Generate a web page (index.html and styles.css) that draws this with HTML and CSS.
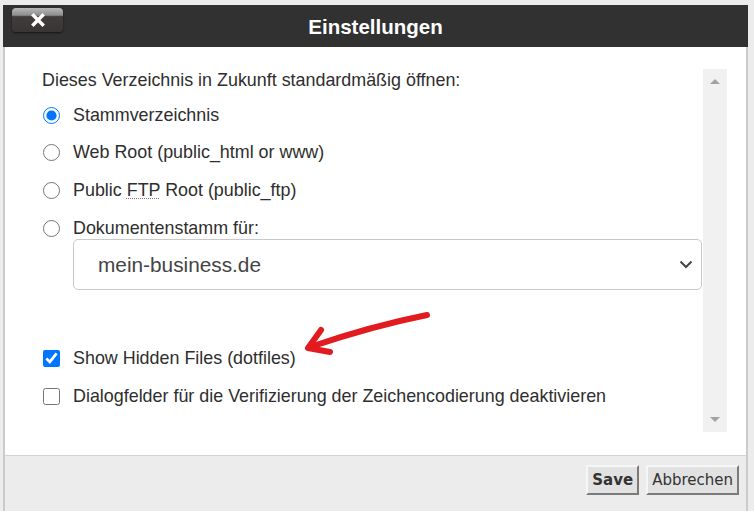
FILE: index.html
```html
<!DOCTYPE html>
<html lang="de">
<head>
<meta charset="utf-8">
<title>Einstellungen</title>
<link rel="stylesheet" href="styles.css">
</head>
<body>
<div class="dialog">
  <div class="header">
    <div class="header-left">
      <button class="close-btn" type="button" aria-label="Schließen">
        <svg width="14" height="14" viewBox="0 0 14 14"><path d="M2.5 2.5 L11.5 11.5 M11.5 2.5 L2.5 11.5" stroke="#fff" stroke-width="3.4" stroke-linecap="square"/></svg>
      </button>
    </div>
    <div class="title">Einstellungen</div>
    <div class="header-right"></div>
  </div>

  <div class="body">
    <div class="content">
      <div class="heading">Dieses Verzeichnis in Zukunft standardmäßig öffnen:</div>
      <div class="options">
        <label class="row"><input type="radio" name="dir" checked><span>Stammverzeichnis</span></label>
        <label class="row"><input type="radio" name="dir"><span>Web Root (public_html or www)</span></label>
        <label class="row"><input type="radio" name="dir"><span>Public <abbr title="File Transfer Protocol">FTP</abbr> Root (public_ftp)</span></label>
        <div class="group">
          <label class="row"><input type="radio" name="dir"><span>Dokumentenstamm für:</span></label>
          <div class="select">
            <span class="select-text">mein-business.de</span>
            <svg class="chevron" width="14" height="9" viewBox="0 0 14 9"><path d="M1.5 1.5 L7 7 L12.5 1.5" fill="none" stroke="#444" stroke-width="2"/></svg>
          </div>
        </div>
      </div>
      <div class="checks">
        <label class="row"><input type="checkbox" checked><span>Show Hidden Files (dotfiles)</span></label>
        <label class="row"><input type="checkbox"><span>Dialogfelder für die Verifizierung der Zeichencodierung deaktivieren</span></label>
      </div>
      <svg class="annot" width="160" height="60" viewBox="0 0 160 60">
        <path d="M147 10 Q 92 21 30 42" fill="none" stroke="#e11b1f" stroke-width="6" stroke-linecap="round"/>
        <path d="M41 25 L28 43 L50 47" fill="none" stroke="#e11b1f" stroke-width="6" stroke-linecap="round" stroke-linejoin="round"/>
      </svg>
    </div>
    <div class="scrollbar">
      <span class="arrow-up"></span>
      <span class="arrow-down"></span>
    </div>
  </div>

  <div class="footer">
    <button class="btn btn-save" type="button">Save</button>
    <button class="btn" type="button">Abbrechen</button>
  </div>
</div>
</body>
</html>
```

FILE: styles.css
```css
html, body {
  margin: 0;
  padding: 0;
}

body {
  background: #ececec;
  font-family: "Liberation Sans", Arial, sans-serif;
  color: #333;
  width: 754px;
  height: 511px;
  overflow: hidden;
}

.dialog {
  margin: 5px 0 0 3px;
  width: 745px;
  box-sizing: border-box;
  border: 2px solid #cbcbcb;
  border-top: none;
  background: #fff;
}

.header {
  height: 42px;
  margin: 0 -2px 0 -2px;
  background: #313131;
  display: grid;
  grid-template-columns: 1fr auto 1fr;
  align-items: center;
}

.header-left {
  align-self: start;
  padding: 3px 0 0 9px;
}

.close-btn {
  width: 51px;
  height: 24px;
  padding: 0;
  border: none;
  border-radius: 4px;
  background: linear-gradient(to bottom, #b8b8b8 0%, #8e8e8e 30%, #413c3c 36%, #3a3535 100%);
  box-shadow: 0 1px 2px rgba(0, 0, 0, 0.6);
  display: flex;
  align-items: center;
  justify-content: center;
}

.title {
  color: #fff;
  font-weight: bold;
  font-size: 20.5px;
  padding-top: 1px;
}

.body {
  height: 408px;
  box-sizing: border-box;
  padding: 22px 19px 23px 20px;
  display: flex;
}

.content {
  flex: 1;
  position: relative;
  padding: 1px 0 0 17px;
  font-size: 17.9px;
  color: #2e2e2e;
}

.heading {
  line-height: 20px;
  margin-bottom: 15px;
}

.options {
  display: flex;
  flex-direction: column;
  gap: 17.7px;
}

.group {
  display: flex;
  flex-direction: column;
  gap: 1px;
}

.row {
  display: flex;
  align-items: center;
  height: 20px;
  gap: 13px;
}

.row input {
  width: 17px;
  height: 17px;
  margin: 0 0 0 1px;
  flex: none;
}

abbr {
  text-decoration: underline dotted;
  text-decoration-color: #777;
  text-decoration-thickness: 1px;
  text-underline-offset: 2px;
}

.select {
  margin: 0 1px 0 31px;
  height: 51px;
  box-sizing: border-box;
  border: 1px solid #c9c9c9;
  border-radius: 5px;
  display: flex;
  align-items: center;
  justify-content: space-between;
  padding: 0 8px 0 24px;
}

.select-text {
  font-size: 20.8px;
  color: #444;
}

.checks {
  margin-top: 58px;
  display: flex;
  flex-direction: column;
  gap: 18px;
}

.annot {
  position: absolute;
  left: 255px;
  top: 236px;
}

.scrollbar {
  width: 24px;
  background: #f1f1f1;
  display: flex;
  flex-direction: column;
  justify-content: space-between;
  align-items: center;
  padding: 10px 0;
  box-sizing: border-box;
}

.arrow-up {
  width: 0;
  height: 0;
  border-left: 5px solid transparent;
  border-right: 5px solid transparent;
  border-bottom: 5px solid #a3a3a3;
}

.arrow-down {
  width: 0;
  height: 0;
  border-left: 5px solid transparent;
  border-right: 5px solid transparent;
  border-top: 5px solid #a3a3a3;
}

.footer {
  height: 49px;
  border-top: 1px solid #d2d2d2;
  background: #ececec;
  display: flex;
  justify-content: flex-end;
  align-items: flex-start;
  gap: 7px;
  padding: 9px 7px 0 0;
  box-sizing: content-box;
}

.btn {
  height: 30px;
  padding: 0 4px;
  font-family: "DejaVu Sans", Tahoma, sans-serif;
  font-size: 15px;
  color: #333;
  background: #e2e2e2;
  border: 2px solid;
  border-color: #f6f6f6 #7b7b7b #7b7b7b #f6f6f6;
  border-radius: 0;
}

.btn-save {
  font-weight: bold;
}
```
